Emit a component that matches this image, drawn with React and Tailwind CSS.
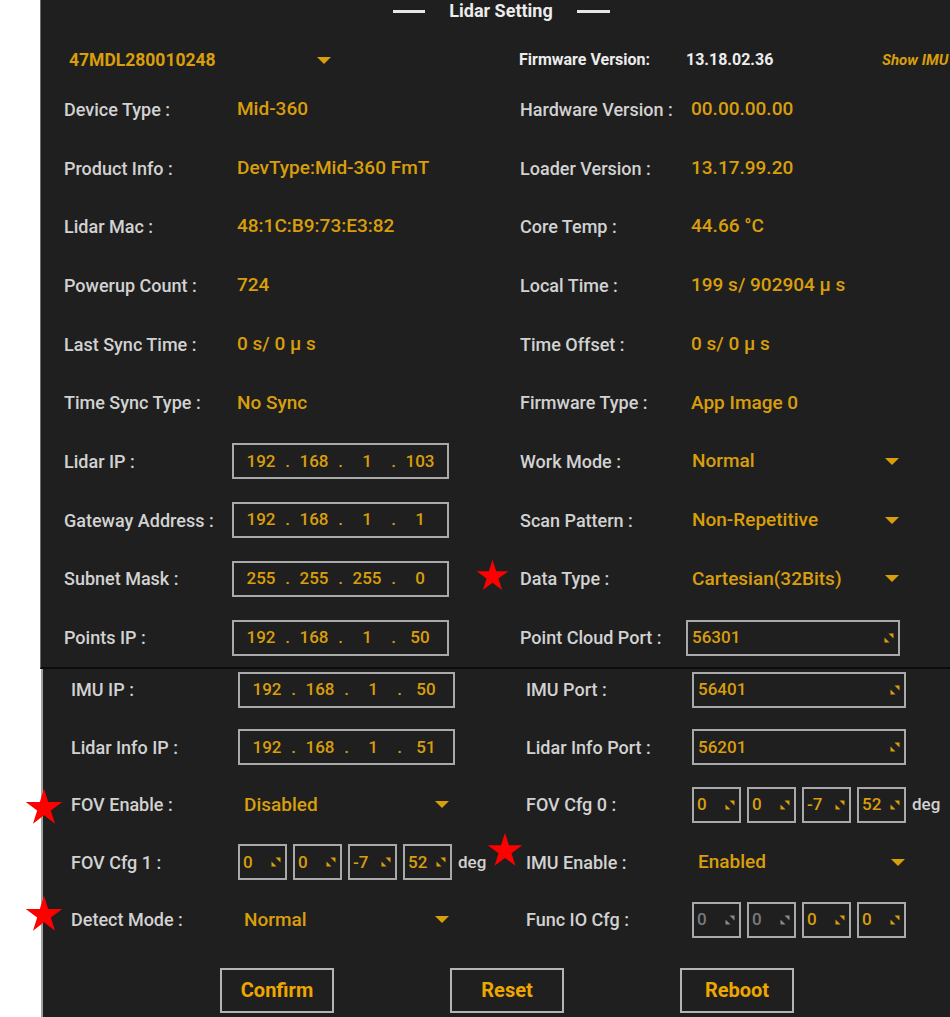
import React from 'react';

const ORANGE = 'text-[#d99e0b]';

// red marker star, centred vertically on its row and nudged by dy
const Star = ({ size, left, dy }) => (
  <svg
    viewBox="0 0 100 100"
    className="absolute top-1/2"
    style={{ width: size, height: size, left, marginTop: -size / 2 + dy }}
  >
    <polygon points="50,2 61,37 98,37 68,59 79,94 50,72 21,94 32,59 2,37 39,37" fill="#ff0000" />
  </svg>
);

const Arrow = () => (
  <svg viewBox="0 0 14 7" className="w-[14px] h-[7px]">
    <polygon points="0,0 14,0 7,7" fill="#d99e0b" />
  </svg>
);

// little spin marks at the right of number fields
const Spin = ({ dim }) => (
  <svg viewBox="0 0 10 10" className="w-[10px] h-[10px]">
    <polygon points="4.5,0.5 9.5,0.5 9.5,5.5" fill={dim ? '#8a8a8a' : '#d99e0b'} />
    <polygon points="0.5,4.5 5.5,9.5 0.5,9.5" fill={dim ? '#8a8a8a' : '#d99e0b'} />
  </svg>
);

const Label = ({ children, w }) => (
  <span className={`${w} shrink-0 text-[18px] font-medium text-[#d2d2d2] whitespace-nowrap`}>{children}</span>
);

const Value = ({ children }) => (
  <span className={`pl-[5px] text-[19px] font-medium ${ORANGE} whitespace-nowrap`}>{children}</span>
);

const IpBox = ({ ip }) => {
  const parts = ip.split('.');
  return (
    <div className="w-[217px] h-[36px] border-2 border-[#a9a9a9] flex items-center pl-[7px] text-[17px] font-medium">
      {parts.map((p, i) => (
        <React.Fragment key={i}>
          <span className={`w-[40px] text-center ${ORANGE}`}>{p}</span>
          {i < 3 && <span className={`w-[13px] text-center ${ORANGE}`}>.</span>}
        </React.Fragment>
      ))}
    </div>
  );
};

const PortBox = ({ value }) => (
  <div className="w-[214px] h-[36px] border-2 border-[#a9a9a9] flex items-center justify-between pl-[4px] pr-[4px]">
    <span className={`text-[17px] font-medium ${ORANGE}`}>{value}</span>
    <Spin />
  </div>
);

const SpinBox = ({ value, dim }) => (
  <div className="w-[49px] h-[36px] border-2 border-[#a9a9a9] flex items-center justify-between pl-[3px] pr-[4px]">
    <span className={`text-[17px] font-medium ${dim ? 'text-[#7a7a7a]' : ORANGE}`}>{value}</span>
    <Spin dim={dim} />
  </div>
);

const SpinGroup = ({ values, dims = [], deg }) => (
  <div className="flex items-center gap-[6px]">
    {values.map((v, i) => (
      <SpinBox key={i} value={v} dim={dims[i]} />
    ))}
    {deg && <span className="text-[17px] font-medium text-[#d2d2d2]">deg</span>}
  </div>
);

const Dropdown = ({ value, w }) => (
  <div className={`${w} flex items-center justify-between pl-[6px] pr-[1px]`}>
    <span className={`text-[19px] font-medium ${ORANGE}`}>{value}</span>
    <Arrow />
  </div>
);

const topRows = [
  [['Device Type :', <Value>Mid-360</Value>], ['Hardware Version :', <Value>00.00.00.00</Value>]],
  [['Product Info :', <Value>DevType:Mid-360 FmT</Value>], ['Loader Version :', <Value>13.17.99.20</Value>]],
  [['Lidar Mac :', <Value>48:1C:B9:73:E3:82</Value>], ['Core Temp :', <Value>44.66 °C</Value>]],
  [['Powerup Count :', <Value>724</Value>], ['Local Time :', <Value>199 s/ 902904 μ s</Value>]],
  [['Last Sync Time :', <Value>0 s/ 0 μ s</Value>], ['Time Offset :', <Value>0 s/ 0 μ s</Value>]],
  [['Time Sync Type :', <Value>No Sync</Value>], ['Firmware Type :', <Value>App Image 0</Value>]],
  [['Lidar IP :', <IpBox ip="192.168.1.103" />], ['Work Mode :', <Dropdown value="Normal" w="w-[214px]" />]],
  [['Gateway Address :', <IpBox ip="192.168.1.1" />], ['Scan Pattern :', <Dropdown value="Non-Repetitive" w="w-[214px]" />]],
  [['Subnet Mask :', <IpBox ip="255.255.255.0" />], ['Data Type :', <Dropdown value="Cartesian(32Bits)" w="w-[214px]" />, true]],
  [['Points IP :', <IpBox ip="192.168.1.50" />], ['Point Cloud Port :', <PortBox value="56301" />]],
];

export default function App() {
  return (
    <div className="w-[950px] h-[1017px] bg-white overflow-hidden" style={{ fontFamily: 'Roboto, "Noto Sans CJK KR", sans-serif' }}>
      {/* upper panel */}
      <div className="ml-[40px] bg-[#1f1f1f] border-l border-[#6b6b6b] border-b-2 border-b-[#0c0c0c]">
        <div className="h-[40px] flex justify-center pl-[12px]">
          <div className="flex items-center gap-[24px] h-[22px]">
            <span className="w-[32px] h-[3px] bg-[#e6e6e6]" />
            <span className="text-[18px] font-bold text-[#ececec] leading-none">Lidar Setting</span>
            <span className="w-[33px] h-[3px] bg-[#e6e6e6]" />
          </div>
        </div>
        <div className="h-[40px] flex items-center pl-[28px]">
          <div className="w-[450px] flex items-center">
            <span className={`w-[248px] text-[17.5px] font-bold ${ORANGE}`}>47MDL280010248</span>
            <Arrow />
          </div>
          <span className="w-[167px] text-[16px] font-bold text-[#ececec]">Firmware Version:</span>
          <span className="w-[196px] text-[16px] font-bold text-[#ececec]">13.18.02.36</span>
          <span className={`text-[15px] font-bold italic ${ORANGE} whitespace-nowrap`}>Show IMU</span>
        </div>
        {topRows.map(([l, r], i) => (
          <div key={i} className="h-[58.7px] flex items-center pl-[23px]">
            <div className="w-[456px] flex items-center">
              <Label w="w-[168px]">{l[0]}</Label>
              {l[1]}
            </div>
            <div className="relative flex items-center">
              {r[2] && <Star size={33} left={-44} dy={-3} />}
              <Label w="w-[166px]">{r[0]}</Label>
              {r[1]}
            </div>
          </div>
        ))}
      </div>

      {/* lower panel */}
      <div className="ml-[41px] h-[350px] bg-[#1f1f1f] border-l-2 border-[#a0a0a0] pt-[3px] pl-[28px]">
        <div className="flex flex-col gap-[21.5px]">
          <div className="h-[36px] flex items-center">
            <div className="w-[455px] flex items-center">
              <Label w="w-[167px]">IMU IP :</Label>
              <IpBox ip="192.168.1.50" />
            </div>
            <Label w="w-[166px]">IMU Port :</Label>
            <PortBox value="56401" />
          </div>
          <div className="h-[36px] flex items-center">
            <div className="w-[455px] flex items-center">
              <Label w="w-[167px]">Lidar Info IP :</Label>
              <IpBox ip="192.168.1.51" />
            </div>
            <Label w="w-[166px]">Lidar Info Port :</Label>
            <PortBox value="56201" />
          </div>
          <div className="h-[36px] flex items-center">
            <div className="relative w-[455px] h-full flex items-center">
              <Star size={38} left={-46} dy={2} />
              <Label w="w-[167px]">FOV Enable :</Label>
              <Dropdown value="Disabled" w="w-[212px]" />
            </div>
            <Label w="w-[166px]">FOV Cfg 0 :</Label>
            <SpinGroup values={['0', '0', '-7', '52']} deg />
          </div>
          <div className="h-[36px] flex items-center">
            <div className="w-[455px] flex items-center">
              <Label w="w-[167px]">FOV Cfg 1 :</Label>
              <SpinGroup values={['0', '0', '-7', '52']} deg />
            </div>
            <div className="relative h-full flex items-center">
              <Star size={36} left={-39} dy={-12} />
              <Label w="w-[166px]">IMU Enable :</Label>
              <Dropdown value="Enabled" w="w-[214px]" />
            </div>
          </div>
          <div className="h-[36px] flex items-center">
            <div className="relative w-[455px] h-full flex items-center">
              <Star size={38} left={-46} dy={-6} />
              <Label w="w-[167px]">Detect Mode :</Label>
              <Dropdown value="Normal" w="w-[212px]" />
            </div>
            <Label w="w-[166px]">Func IO Cfg :</Label>
            <SpinGroup values={['0', '0', '0', '0']} dims={[true, true, false, false]} />
          </div>
        </div>
        <div className="mt-[30px] flex gap-[116px] pl-[149px]">
          {['Confirm', 'Reset', 'Reboot'].map((b) => (
            <button key={b} className="w-[114px] h-[45px] border-2 border-[#b4b4b4] text-[20px] font-bold text-[#eea600]">
              {b}
            </button>
          ))}
        </div>
      </div>
    </div>
  );
}
